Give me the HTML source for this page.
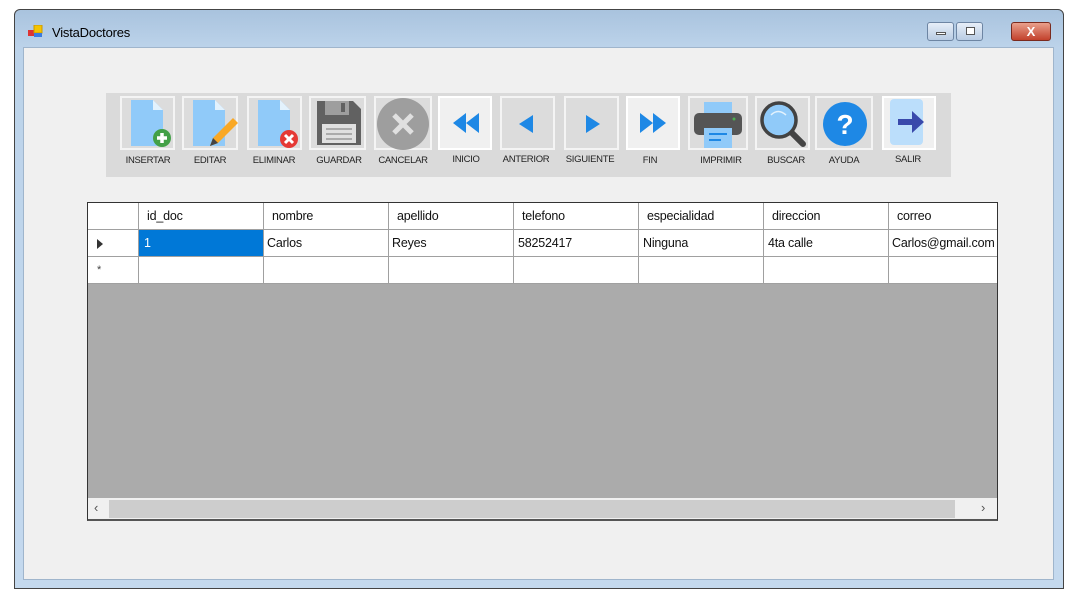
<!DOCTYPE html>
<html><head><meta charset="utf-8"><style>
*{margin:0;padding:0;box-sizing:border-box}
body{width:1074px;height:597px;background:#fff;position:relative;overflow:hidden;font-family:"Liberation Sans",sans-serif}
.win{position:absolute;left:14px;top:9px;width:1050px;height:580px;border:1px solid #444;border-radius:6px 6px 0 0;background:linear-gradient(#a9c3de,#bcd3ea 38px,#c4d9ee);}
.client{position:absolute;left:23px;top:47px;width:1031px;height:533px;background:#f0f0f0;border:1px solid #9fb5cc}
.title{position:absolute;left:52px;top:25px;font-size:13px;color:#000;letter-spacing:-0.2px}
.abs{position:absolute}
.tb{position:absolute;left:106px;top:93px;width:845px;height:84px;background:#dadada}
.btn{position:absolute;top:96px;height:54px;background:#dcdcdc;border:2px solid #f4f4f4}
.btn.l{background:#f0f0f0;border-color:#fff}
.lbl{position:absolute;top:155px;font-size:9.5px;color:#222;text-align:center;letter-spacing:-0.3px}
.grid{position:absolute;left:87px;top:202px;width:911px;height:319px;background:#ababab;border:1px solid #333;border-bottom:2px solid #555;overflow:hidden}
.c{position:absolute;height:27px;border-right:1px solid #a0a0a0;border-bottom:1px solid #a0a0a0;background:#fff;font-size:12.5px;line-height:26px;padding-left:8px;color:#111;white-space:nowrap;overflow:hidden;letter-spacing:-0.2px}
</style></head><body>
<div class="win"></div>
<svg class="abs" style="left:28px;top:25px" width="16" height="14"><rect x="0" y="5" width="6" height="6" fill="#d33"/><rect x="6" y="0" width="8" height="8" fill="#f5c400" stroke="#c90" stroke-width="1"/><rect x="6" y="8" width="8" height="4" fill="#3a7be0"/></svg>
<div class="title">VistaDoctores</div>
<div class="abs" style="left:927px;top:22px;width:27px;height:19px;border:1px solid #6d85a3;border-radius:3px;background:linear-gradient(#e6eef8,#b9cce3)"><div class="abs" style="left:8px;top:9px;width:10px;height:3px;background:#fff;border:1px solid #555"></div></div>
<div class="abs" style="left:956px;top:22px;width:27px;height:19px;border:1px solid #6d85a3;border-radius:3px;background:linear-gradient(#e6eef8,#b9cce3)"><div class="abs" style="left:9px;top:4px;width:9px;height:8px;background:#fff;border:1px solid #555"></div></div>
<div class="abs" style="left:1011px;top:22px;width:40px;height:19px;border:1px solid #7a2a1e;border-radius:3px;background:linear-gradient(#e9a08c,#c2412c);color:#fff;font-weight:bold;font-size:13px;text-align:center;line-height:17px">X</div>
<div class="client"></div>
<div class="tb"></div>

<div class="btn" style="left:120px;width:55px"></div>
<svg class="abs" style="left:128px;top:98px" width="48" height="52"><path d="M3 2h22l10 10v36H3z" fill="#90caf9"/><path d="M25 2v10h10z" fill="#e3f2fd"/><circle cx="34" cy="40" r="9" fill="#43a047"/><path d="M29 40h10M34 35v10" stroke="#fff" stroke-width="3.5"/></svg>
<div class="btn" style="left:182px;width:56px"></div>
<svg class="abs" style="left:190px;top:98px" width="48" height="52"><path d="M3 2h22l10 10v36H3z" fill="#90caf9"/><path d="M25 2v10h10z" fill="#e3f2fd"/><path d="M20 48l3-8 20-20 5 5-20 20z" fill="#f9a825"/><path d="M20 48l3-8 5 5z" fill="#444"/></svg>
<div class="btn" style="left:247px;width:55px"></div>
<svg class="abs" style="left:255px;top:98px" width="48" height="52"><path d="M3 2h22l10 10v36H3z" fill="#90caf9"/><path d="M25 2v10h10z" fill="#e3f2fd"/><circle cx="34" cy="41" r="9" fill="#e53935"/><path d="M30 37l8 8M38 37l-8 8" stroke="#fff" stroke-width="3"/></svg>
<div class="btn" style="left:309px;width:57px"></div>
<svg class="abs" style="left:315px;top:99px" width="48" height="48"><path d="M2 2h36l8 8v36H2z" fill="#616161"/><rect x="10" y="2" width="24" height="14" fill="#9e9e9e"/><rect x="26" y="4" width="4" height="9" fill="#616161"/><rect x="7" y="25" width="34" height="19" fill="#e0e0e0"/><path d="M11 30h26M11 35h26M11 40h26" stroke="#999" stroke-width="1.5"/></svg>
<div class="btn" style="left:374px;width:58px"></div>
<svg class="abs" style="left:376px;top:97px" width="54" height="54"><circle cx="27" cy="27" r="26" fill="#9e9e9e"/><path d="M18 18l18 18M36 18l-18 18" stroke="#e0e0e0" stroke-width="5"/></svg>
<div class="btn l" style="left:438px;width:54px"></div>
<svg class="abs" style="left:452px;top:112px" width="28" height="22"><path d="M14 1L1 11l13 10zM27 1L14 11l13 10z" fill="#1e88e5"/></svg>
<div class="btn" style="left:500px;width:55px"></div>
<svg class="abs" style="left:518px;top:114px" width="16" height="20"><path d="M15 1L1 10l14 9z" fill="#1e88e5"/></svg>
<div class="btn" style="left:564px;width:55px"></div>
<svg class="abs" style="left:585px;top:114px" width="16" height="20"><path d="M1 1l14 9-14 9z" fill="#1e88e5"/></svg>
<div class="btn l" style="left:626px;width:54px"></div>
<svg class="abs" style="left:639px;top:112px" width="28" height="22"><path d="M1 1l13 10-13 10zM14 1l13 10-13 10z" fill="#1e88e5"/></svg>
<div class="btn" style="left:688px;width:60px"></div>
<svg class="abs" style="left:692px;top:101px" width="52" height="48"><rect x="12" y="1" width="28" height="12" fill="#90caf9"/><rect x="2" y="12" width="48" height="22" rx="5" fill="#555"/><circle cx="42" cy="18" r="1.5" fill="#4caf50"/><rect x="12" y="27" width="28" height="20" fill="#90caf9"/><path d="M17 33h18M17 39h12" stroke="#1e88e5" stroke-width="2"/></svg>
<div class="btn" style="left:755px;width:55px"></div>
<svg class="abs" style="left:758px;top:99px" width="50" height="52"><path d="M30 30l15 15" stroke="#444" stroke-width="6" stroke-linecap="round"/><circle cx="21" cy="21" r="17" fill="#90caf9" stroke="#424242" stroke-width="3.5"/><path d="M13 16q7-7 15 0" stroke="#e3f2fd" stroke-width="1.5" fill="none"/></svg>
<div class="btn" style="left:815px;width:58px"></div>
<svg class="abs" style="left:822px;top:101px" width="46" height="46"><circle cx="23" cy="23" r="22" fill="#1e88e5"/><text x="23" y="33" font-family="Liberation Sans" font-weight="bold" font-size="28" fill="#fff" text-anchor="middle">?</text></svg>
<div class="btn l" style="left:882px;width:54px"></div>
<svg class="abs" style="left:890px;top:99px" width="40" height="50"><rect x="0" y="0" width="33" height="46" rx="4" fill="#bbdefb"/><path d="M8 20h14v-8l12 11-12 11v-8H8z" fill="#3949ab"/></svg>

<div class="lbl" style="left:118px;width:60px">INSERTAR</div>
<div class="lbl" style="left:180px;width:60px">EDITAR</div>
<div class="lbl" style="left:244px;width:60px">ELIMINAR</div>
<div class="lbl" style="left:308px;width:62px">GUARDAR</div>
<div class="lbl" style="left:372px;width:62px">CANCELAR</div>
<div class="lbl" style="left:436px;width:60px;top:154px">INICIO</div>
<div class="lbl" style="left:496px;width:60px;top:154px">ANTERIOR</div>
<div class="lbl" style="left:560px;width:60px;top:154px">SIGUIENTE</div>
<div class="lbl" style="left:620px;width:60px">FIN</div>
<div class="lbl" style="left:690px;width:62px">IMPRIMIR</div>
<div class="lbl" style="left:756px;width:60px">BUSCAR</div>
<div class="lbl" style="left:814px;width:60px">AYUDA</div>
<div class="lbl" style="left:878px;width:60px;top:154px">SALIR</div>

<div class="grid">
<div class="c" style="left:0;top:0;width:51px"></div>
<div class="c" style="left:51px;top:0;width:125px">id_doc</div>
<div class="c" style="left:176px;top:0;width:125px">nombre</div>
<div class="c" style="left:301px;top:0;width:125px">apellido</div>
<div class="c" style="left:426px;top:0;width:125px">telefono</div>
<div class="c" style="left:551px;top:0;width:125px">especialidad</div>
<div class="c" style="left:676px;top:0;width:125px">direccion</div>
<div class="c" style="left:801px;top:0;width:125px">correo</div>
<div class="c" style="left:0;top:27px;width:51px"><svg width="8" height="10" style="margin-top:9px"><path d="M1 0l6 5-6 5z" fill="#333"/></svg></div>
<div class="c" style="left:51px;top:27px;width:125px;background:#0078d7;color:#fff;padding-left:5px">1</div>
<div class="c" style="left:176px;top:27px;width:125px;padding-left:3px">Carlos</div>
<div class="c" style="left:301px;top:27px;width:125px;padding-left:3px">Reyes</div>
<div class="c" style="left:426px;top:27px;width:125px;padding-left:4px">58252417</div>
<div class="c" style="left:551px;top:27px;width:125px;padding-left:4px">Ninguna</div>
<div class="c" style="left:676px;top:27px;width:125px;padding-left:4px">4ta calle</div>
<div class="c" style="left:801px;top:27px;width:125px;padding-left:3px">Carlos@gmail.com</div>
<div class="c" style="left:0;top:54px;width:51px;font-size:11px;padding-left:9px;color:#444">*</div>
<div class="c" style="left:51px;top:54px;width:125px"></div>
<div class="c" style="left:176px;top:54px;width:125px"></div>
<div class="c" style="left:301px;top:54px;width:125px"></div>
<div class="c" style="left:426px;top:54px;width:125px"></div>
<div class="c" style="left:551px;top:54px;width:125px"></div>
<div class="c" style="left:676px;top:54px;width:125px"></div>
<div class="c" style="left:801px;top:54px;width:125px"></div>
<div class="abs" style="left:0;top:295px;width:911px;height:22px;background:#f0f0f0"></div>
<div class="abs" style="left:21px;top:297px;width:846px;height:18px;background:#cdcdcd"></div>
<div class="abs" style="left:6px;top:297px;font-size:13px;color:#555">&#8249;</div>
<div class="abs" style="left:893px;top:297px;font-size:13px;color:#555">&#8250;</div>
</div>
</body></html>
